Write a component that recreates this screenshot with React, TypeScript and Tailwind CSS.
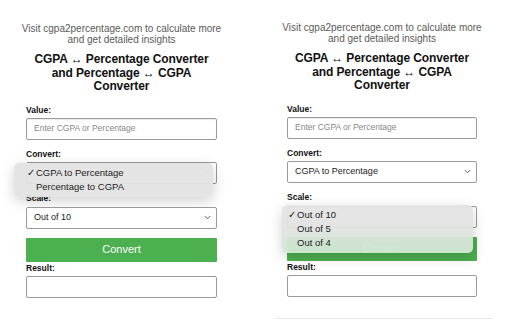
import React from 'react';

const font = { fontFamily: '"Liberation Sans", Arial, sans-serif' };

function Chevron({ faint }: { faint?: boolean }) {
    return (
        <svg width="7" height="5" viewBox="0 0 7 5" className={faint ? 'opacity-40' : ''}>
            <path d="M0.8 1 L3.5 3.8 L6.2 1" fill="none" stroke="#555" strokeWidth="0.9" />
        </svg>
    );
}

function Label({ children, className = '' }: { children: React.ReactNode; className?: string }) {
    return <div className={`text-[8.5px] font-bold text-[#111] leading-[10px] ${className}`}>{children}</div>;
}

function Panel({ popup }: { popup: 'convert' | 'scale' }) {
    return (
        <div className="flex flex-col">
            <div className="text-center text-[10px] leading-[10.5px] text-[#5a5a5a] mt-[24px] w-[200px] self-center">
                Visit cgpa2percentage.com to calculate more and get detailed insights
            </div>
            <div className="text-center text-[12px] font-bold leading-[13.5px] tracking-[-0.1px] text-[#111] mt-[8px] whitespace-nowrap -mx-4">
                CGPA ↔ Percentage Converter
                <br />
                and Percentage ↔ CGPA
                <br />
                Converter
            </div>

            <Label className="mt-[11px]">Value:</Label>
            <div className="mt-[3px] h-[22px] border border-[#9a9a9a] rounded-[2px] flex items-center px-[7px] text-[8.5px] text-[#888] shadow-[inset_0_1px_1px_rgba(0,0,0,0.08)]">
                Enter CGPA or Percentage
            </div>

            <Label className="mt-[9px]">Convert:</Label>
            <div className="relative mt-[3px]">
                <div className="h-[22px] border border-[#9a9a9a] rounded-[2px] bg-white flex items-center justify-between pl-[7px] pr-[5px] text-[9px] text-[#222]">
                    <span className={popup === 'convert' ? 'invisible' : ''}>CGPA to Percentage</span>
                    <Chevron />
                </div>
                {popup === 'convert' && (
                    <div className="absolute left-[-12px] top-[1px] w-[199px] h-[34px] rounded-[5px] bg-[#e3e3e3]/95 shadow-[0_4px_14px_rgba(0,0,0,0.18)] flex flex-col justify-center text-[9.5px] text-[#222] leading-[14px]">
                        <div className="flex"><span className="w-[22px] text-right pr-[1px]">✓</span><span>CGPA to Percentage</span></div>
                        <div className="flex"><span className="w-[22px]" /><span>Percentage to CGPA</span></div>
                    </div>
                )}
            </div>

            <Label className="mt-[9px]">Scale:</Label>
            <div className="relative mt-[4px]">
                <div className="h-[22px] border border-[#9a9a9a] rounded-[2px] bg-white flex items-center justify-between pl-[7px] pr-[5px] text-[9px] text-[#222]">
                    <span className={popup === 'scale' ? 'invisible' : ''}>Out of 10</span>
                    <Chevron faint={popup === 'scale'} />
                </div>
                {popup === 'scale' && (
                    <div className="absolute left-[-5px] top-[-1px] w-[191px] h-[48px] rounded-[5px] bg-gradient-to-b from-[#e4e4e4]/95 via-[#e1e3e1]/95 to-[#cfe8d2]/95 shadow-[0_4px_14px_rgba(0,0,0,0.18)] flex flex-col justify-center text-[9.5px] text-[#222] leading-[14px]">
                        <div className="flex"><span className="w-[15px] text-right pr-[1px]">✓</span><span>Out of 10</span></div>
                        <div className="flex"><span className="w-[15px]" /><span>Out of 5</span></div>
                        <div className="flex"><span className="w-[15px]" /><span>Out of 4</span></div>
                    </div>
                )}
            </div>

            <div className="mt-[9px] h-[24px] bg-[#4caf50] rounded-[1px] flex items-center justify-center text-white text-[11px]">
                Convert
            </div>
            <Label className="mt-[1px]">Result:</Label>
            <div className="mt-[3px] h-[22px] border border-[#9a9a9a] rounded-[2px] bg-white" />
        </div>
    );
}

export default function App() {
    return (
        <div className="w-[512px] h-[320px] bg-white overflow-hidden flex relative" style={font}>
            <div className="w-[256px] pl-[26px]">
                <div className="w-[191px]">
                    <Panel popup="convert" />
                </div>
            </div>
            <div className="w-[256px] pl-[31px] -mt-[1px]">
                <div className="w-[190px]">
                    <Panel popup="scale" />
                </div>
            </div>
            <div className="absolute left-[275px] top-[318px] w-[217px] h-px bg-[#e6e6e6]" />
        </div>
    );
}
